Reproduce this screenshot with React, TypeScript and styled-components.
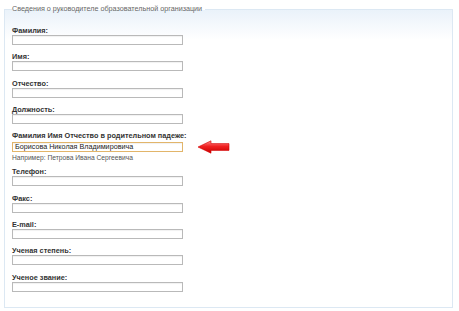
import React from "react";
import styled, { createGlobalStyle } from "styled-components";

const GlobalStyle = createGlobalStyle`
  html, body {
    margin: 0;
    padding: 0;
    background: #ffffff;
  }
  body {
    font-family: "Liberation Sans", Arial, sans-serif;
  }
`;

const Page = styled.div`
  width: 459px;
  height: 311px;
  padding: 4px 6px 0 4px;
  box-sizing: border-box;
`;

const Panel = styled.fieldset`
  margin: 0;
  height: 304px;
  box-sizing: border-box;
  padding: 13px 0 0 7px;
  border: 1px solid #dce8f3;
  background: linear-gradient(#eaf2fa 0px, #ffffff 30px);
`;

const Legend = styled.legend`
  padding: 0 3px 0 0;
  margin-left: 0;
  font-size: 7.2px;
  line-height: 10px;
  color: #666;
`;

const Field = styled.div`
  margin-bottom: 8.3px;
`;

const Label = styled.label`
  display: block;
  font-size: 7.3px;
  line-height: 8px;
  font-weight: bold;
  color: #333;
`;

const Input = styled.div<{ $active?: boolean }>`
  width: 171px;
  height: 10px;
  box-sizing: border-box;
  border: 1px solid ${(p) => (p.$active ? "#e2b56a" : "#b9b9b9")};
  background: #fff;
  box-shadow: inset 0 1px 1px rgba(0, 0, 0, 0.06);
  padding: 0 2px;
  font-size: 7.2px;
  line-height: 8px;
  color: #222;
  white-space: nowrap;
`;

const ActiveRow = styled.div`
  display: flex;
  align-items: center;
  gap: 14px;
`;

const Hint = styled.div`
  font-size: 6.7px;
  line-height: 7px;
  color: #555;
  margin-bottom: -1px;
`;

const Arrow = () => (
  <svg width="33" height="14" viewBox="0 0 33 14">
    <defs>
      <linearGradient id="ag" x1="0" y1="0" x2="0" y2="1">
        <stop offset="0" stopColor="#ff8a8a" />
        <stop offset="0.45" stopColor="#f02020" />
        <stop offset="1" stopColor="#c80000" />
      </linearGradient>
    </defs>
    <path
      d="M1 7 L14 0.8 L14 3.6 L32 3.6 L32 10.4 L14 10.4 L14 13.2 Z"
      fill="url(#ag)"
      stroke="#d40000"
      strokeWidth="0.6"
    />
  </svg>
);

const fields = ["Фамилия:", "Имя:", "Отчество:", "Должность:"];
const after = ["Телефон:", "Факс:", "E-mail:", "Ученая степень:", "Ученое звание:"];

export default function App() {
  return (
    <>
      <GlobalStyle />
      <Page>
        <Panel>
          <Legend>Сведения о руководителе образовательной организации</Legend>
          {fields.map((f) => (
            <Field key={f}>
              <Label>{f}</Label>
              <Input />
            </Field>
          ))}
          <Field>
            <Label>Фамилия Имя Отчество в родительном падеже:</Label>
            <ActiveRow>
              <Input $active>Борисова Николая Владимировича</Input>
              <Arrow />
            </ActiveRow>
            <Hint>Например: Петрова Ивана Сергеевича</Hint>
          </Field>
          {after.map((f) => (
            <Field key={f}>
              <Label>{f}</Label>
              <Input />
            </Field>
          ))}
        </Panel>
      </Page>
    </>
  );
}
